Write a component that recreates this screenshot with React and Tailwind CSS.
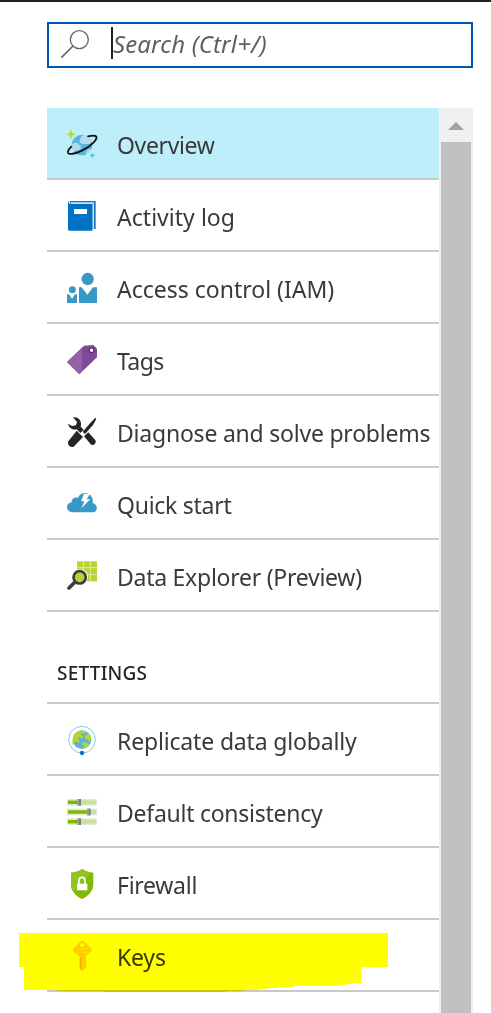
import React from "react";

function Icon({ children }) {
  return (
    <svg viewBox="0 0 90 90" className="size-[30px] shrink-0 overflow-visible">
      {children}
    </svg>
  );
}

const CosmosIcon = () => (
  <Icon>
    <circle cx="45" cy="48" r="31" fill="#59b4d9" />
    <path d="M40 28c2-6 9-11 16-10 9 2 12 10 17 17 2 5-3 11-10 10H48c-9 0-13-10-8-17zM16 45c8-6 17-5 20 3 9 3 7 14-1 16l-16 2c-4-6-5-14-3-21zM58 69c1-5 5-8 10-8l6-1c-4 9-10 14-18 16-2-2-1-5 2-7z" fill="#b0dcef" />
    <path d="M63 22c12-3 22-3 25 1 4 8-15 28-42 41-22 11-41 14-43 7-1-4 3-11 10-18" fill="none" stroke="#111" strokeWidth="5.5" strokeLinecap="round" />
    <path d="M12 2c2 9 4 12 13 14-9 2-11 5-13 14-2-9-4-12-13-14 9-2 11-5 13-14z" fill="#b8d432" stroke="#b8d432" strokeWidth="1.5" />
    <path d="M76 72c1 5 2 6 8 7-6 1-7 2-8 8-1-6-2-7-8-8 6-1 7-2 8-7z" fill="#32bee8" stroke="#32bee8" />
  </Icon>
);

const BookIcon = () => (
  <Icon>
    <path d="M9 0h77v84H76V9H9z" fill="#1877c0" />
    <path d="M10 4h71v79h-5V9H12z" fill="#d6dde3" />
    <path d="M5 3c0 4 2 6 7 6h64v80H10c-5 0-7-2-7-6V4c0-2 2-4 5-4z" fill="#0072c6" />
    <path d="M21 24h39v15H21z" fill="#fff" />
  </Icon>
);

const PeopleIcon = () => (
  <Icon>
    <g fill="#3999c6">
      <circle cx="62" cy="18" r="18.5" />
      <path d="M36 43h8l17 22 17-22h12v47H36z" />
      <circle cx="16" cy="50" r="10.5" />
      <path d="M0 64h6l9 13 9-13h6v26H0z" />
    </g>
    <path d="M53 43h19l-10 12z" fill="#fff" />
    <path d="M10 64h10l-5 7z" fill="#fff" />
  </Icon>
);

const TagIcon = () => (
  <Icon>
    <path d="M51 2l28-2 11 11v26L37 88 0 51z" fill="#804998" />
    <path d="M51 2L0 51l37 37 8-8V7z" fill="#9461a9" />
    <circle cx="74" cy="16" r="7" fill="#fff" stroke="#56266d" strokeWidth="3.5" />
  </Icon>
);

const ToolsIcon = () => (
  <Icon>
    <path d="M18 1C28-1 38 4 41 14c2 6 1 10 0 15l9 9-10 10-11-11C18 40 6 33 3 20l12 7 12-2 3-10z" fill="#252525" />
    <path d="M51 58l13-12 20 22c7 8-5 21-13 14z" fill="#252525" />
    <path d="M85 2l3 4-10 18-24 27-7-7 23-26z" fill="#252525" />
    <path d="M29 41l19 19-28 29C10 94 0 83 4 73z" fill="#252525" />
  </Icon>
);

const CloudIcon = () => (
  <Icon>
    <path d="M15 70C-4 68-5 43 13 40c1-11 11-17 20-13C38 13 53 9 65 15c10 5 14 15 12 27 16 3 17 28 0 28z" fill="#3999c6" />
    <path d="M51 14h18L59 31h11L43 58l9-21H42z" fill="#fff" />
  </Icon>
);

const ExplorerIcon = () => (
  <Icon>
    <path d="M30 1h60v60H30z" fill="#b8d432" />
    <path d="M49 1v60M70 1v60M30 20h60M30 41h60" stroke="#e8f2b8" strokeWidth="2.5" />
    <circle cx="39" cy="48" r="24" fill="#fff" />
    <path d="M24 63L6 81" stroke="#3e3e3e" strokeWidth="11" strokeLinecap="round" />
    <circle cx="38" cy="49" r="18.5" fill="#b8d432" stroke="#3e3e3e" strokeWidth="8" />
  </Icon>
);

const GlobeIcon = () => (
  <Icon>
    <circle cx="45" cy="44" r="40" fill="none" stroke="#83c8e3" strokeWidth="3" />
    <circle cx="45" cy="44" r="28" fill="#59b4d9" />
    <path d="M18 38c3-12 13-21 25-22l14 3-3 7-9-2-4 6 8 4-3 8-8-6-6 7 7 5-4 6-9-6-9 12c-1-7-1-15 1-22zM55 33l8-9c6 5 9 11 10 19l-6 7-6-7-8-2zM49 51l12 3 6 6c-4 6-9 9-15 11l-2-10-6-4z" fill="#b8d432" />
    <circle cx="45" cy="84" r="6.5" fill="#0072c6" />
  </Icon>
);

function SliderBar({ y, x }) {
  return (
    <g>
      <path d={`M0 ${y}h90v20H0z`} fill="#e1e7d7" />
      <path d={`M3 ${y + 4}h84v12H3z`} fill="#c8e29c" />
      <path d={`M3 ${y + 5}h${x}v10H3z`} fill="#7fba00" />
      <path d={`M${x} ${y}h10v20h-10z`} fill="#7a7a7a" />
      <path d={`M${x} ${y}h4v20h-4z`} fill="#aaa" />
    </g>
  );
}

const SlidersIcon = () => (
  <Icon>
    <SliderBar y={6} x={32} />
    <SliderBar y={35} x={61} />
    <SliderBar y={64} x={32} />
  </Icon>
);

const ShieldIcon = () => (
  <Icon>
    <path d="M45 0c10 7 21 10 34 11v34c0 21-15 36-34 45C26 81 12 66 12 45V11C25 10 36 7 45 0z" fill="#7fba00" />
    <path d="M45 0c9 6 18 9 28 10L20 70c-5-7-8-15-8-25V11C25 10 36 7 45 0z" fill="#91c420" />
    <path d="M30 44h31v20H30z" fill="#fff" />
    <path d="M36 45V35c0-13 18-13 18 0v10" fill="none" stroke="#fff" strokeWidth="5" />
  </Icon>
);

const KeyIcon = () => (
  <Icon>
    <path d="M45-1c3 0 5 1 7 3l20 20c3 3 2 7-1 10L56 46v9l4 4-4 4 3 4-3 4 3 5-3 5-10 9-9-7V46L20 33c-3-4-3-8 0-11L39 2c2-2 4-3 6-3z" fill="#fc0" />
    <path d="M39 51h4v34l-4-3z" fill="#efae00" />
    <circle cx="46" cy="13" r="6" fill="#fff" />
    <path d="M27 24h37M27 34h37" stroke="#ffe34d" strokeWidth="3" />
  </Icon>
);

function MenuItem({ icon: Glyph, label, tracking, selected }) {
  return (
    <li
      className={`flex h-[72px] items-start border-b-2 border-[#c9c9c9] pt-[21px] pl-5 ${selected ? "bg-[#bdeefa]" : ""}`}
    >
      <Glyph />
      <span className={`ml-5 h-[30px] text-[23px] leading-[32px] whitespace-nowrap text-[#3a3a3a] ${tracking}`}>
        {label}
      </span>
    </li>
  );
}

const general = [
  { icon: CosmosIcon, label: "Overview", tracking: "tracking-[-0.36px]", selected: true },
  { icon: BookIcon, label: "Activity log", tracking: "tracking-[0.03px]" },
  { icon: PeopleIcon, label: "Access control (IAM)", tracking: "tracking-[0px]" },
  { icon: TagIcon, label: "Tags", tracking: "tracking-[-0.6px]" },
  { icon: ToolsIcon, label: "Diagnose and solve problems", tracking: "tracking-[-0.22px]" },
  { icon: CloudIcon, label: "Quick start", tracking: "tracking-[-0.27px]" },
  { icon: ExplorerIcon, label: "Data Explorer (Preview)", tracking: "tracking-[-0.26px]" },
];

const settings = [
  { icon: GlobeIcon, label: "Replicate data globally", tracking: "tracking-[-0.16px]" },
  { icon: SlidersIcon, label: "Default consistency", tracking: "tracking-[-0.26px]" },
  { icon: ShieldIcon, label: "Firewall", tracking: "tracking-[-0.28px]" },
  { icon: KeyIcon, label: "Keys", tracking: "tracking-[-0.2px]" },
];

export default function App() {
  return (
    <div className="relative flex h-[1013px] w-[491px] flex-col overflow-hidden border-t-2 border-[#222] bg-white font-['Noto_Sans','Open_Sans',sans-serif]">
      <div className="mt-5 ml-[47px] flex h-[46px] w-[426px] shrink-0 items-start border-2 border-[#0058ad] pl-3">
        <svg viewBox="0 0 84 84" className="mt-1.5 size-7 shrink-0" fill="none" stroke="#666" strokeWidth="4">
          <circle cx="55" cy="29" r="27" />
          <path d="M36 48L1 83" strokeWidth="5" />
        </svg>
        <span className="mt-[3px] ml-[22px] h-8 w-0.5 shrink-0 bg-[#222]" />
        <span className="text-[24px] leading-[40px] tracking-[0.13px] whitespace-nowrap text-[#606060] italic">
          Search (Ctrl+/)
        </span>
      </div>

      <div className="mt-10 ml-[47px] flex w-[426px] flex-1">
        <nav className="w-[392px]">
          <ul>
            {general.map((item) => (
              <MenuItem key={item.label} {...item} />
            ))}
          </ul>
          <h2 className="flex h-[92px] items-end border-b-2 border-[#c9c9c9] pb-[14px] pl-2.5 text-[19px] leading-[30px] font-medium tracking-[0.22px] text-[#252525]">
            SETTINGS
          </h2>
          <ul>
            {settings.map((item) => (
              <MenuItem key={item.label} {...item} />
            ))}
          </ul>
        </nav>
        <div className="flex w-[34px] flex-col items-center bg-[#f0f0f0]">
          <div className="flex h-[34px] items-start pt-3.5">
            <svg viewBox="0 0 16 8" className="h-2 w-4">
              <path d="M8 0l8 8H0z" fill="#a3a3a3" />
            </svg>
          </div>
          <div className="w-[30px] flex-1 bg-[#c1c1c1]" />
        </div>
      </div>

      <svg viewBox="19 933 369 59" className="absolute top-[931px] left-[19px] h-[59px] w-[369px] mix-blend-multiply">
        <path
          d="M19 933H388V967H361V983H353V984H347V985H340V986H294V987H278V988H267V989H258V990H244V991H226V992H103V991H57V990H24V967H19Z"
          fill="#ff0"
          shapeRendering="crispEdges"
        />
      </svg>
    </div>
  );
}
